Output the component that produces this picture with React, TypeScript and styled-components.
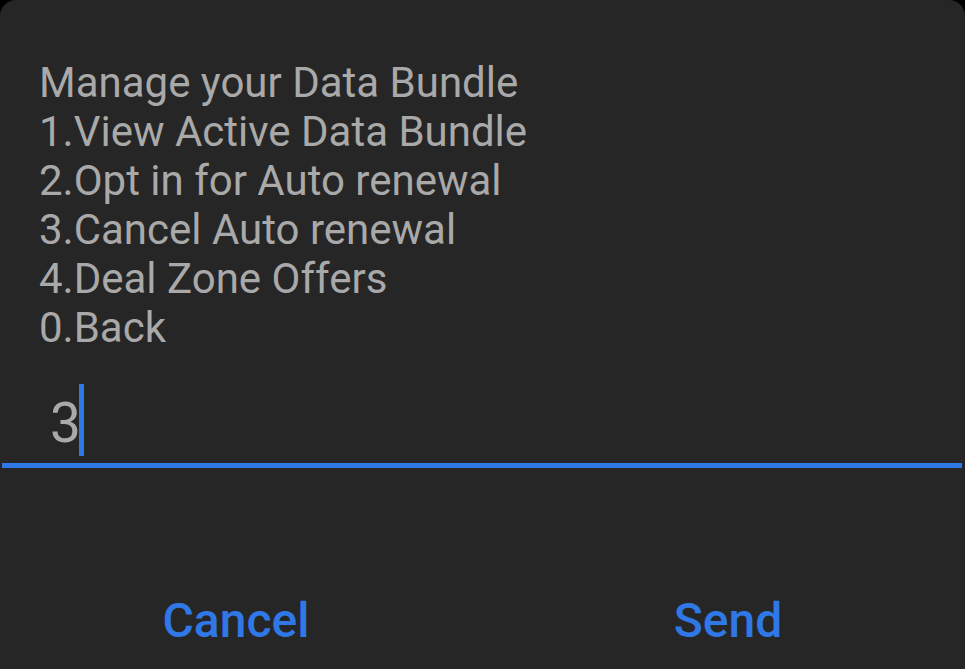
import React from 'react';
import styled, { createGlobalStyle } from 'styled-components';

const GlobalStyle = createGlobalStyle`
  html, body {
    margin: 0;
    padding: 0;
    background: #000;
  }
  body {
    font-family: Roboto, "Noto Sans", sans-serif;
  }
`;

const Dialog = styled.div`
  width: 965px;
  height: 669px;
  background: #262626;
  border-radius: 16px 16px 0 0;
  display: flex;
  flex-direction: column;
  overflow: hidden;
`;

const Message = styled.div`
  padding: 58px 0 0 39px;
  color: #a9a9a9;
  font-size: 42px;
  line-height: 49px;
`;

const Line = styled.div`
  white-space: nowrap;
`;

const InputRow = styled.div`
  margin: 35px 3px 0 2px;
  height: 81px;
  border-bottom: 5px solid #2f78e6;
  display: flex;
  align-items: flex-start;
  padding-left: 48px;
  box-sizing: border-box;
`;

const Value = styled.span`
  color: #a9a9a9;
  font-size: 55px;
  line-height: 72px;
`;

const Caret = styled.span`
  display: inline-block;
  width: 5px;
  height: 72px;
  margin: -3px 0 0 -2px;
  background: #2f78e6;
`;

const Actions = styled.div`
  margin-top: auto;
  display: grid;
  grid-template-columns: 472px 472px;
  column-gap: 20px;
  padding-bottom: 20px;
`;

const ActionButton = styled.button`
  background: none;
  border: none;
  padding: 0;
  color: #2f78e6;
  font-family: Roboto, sans-serif;
  font-weight: 500;
  font-size: 48px;
  line-height: 56px;
  text-align: center;
  cursor: pointer;
`;

const lines = [
  'Manage your Data Bundle',
  '1.View Active Data Bundle',
  '2.Opt in for Auto renewal',
  '3.Cancel Auto renewal',
  '4.Deal Zone Offers',
  '0.Back',
];

export default function App() {
  return (
    <>
      <GlobalStyle />
      <Dialog>
        <Message>
          {lines.map((l) => (
            <Line key={l}>{l}</Line>
          ))}
        </Message>
        <InputRow>
          <Value>3</Value>
          <Caret />
        </InputRow>
        <Actions>
          <ActionButton>Cancel</ActionButton>
          <ActionButton>Send</ActionButton>
        </Actions>
      </Dialog>
    </>
  );
}
